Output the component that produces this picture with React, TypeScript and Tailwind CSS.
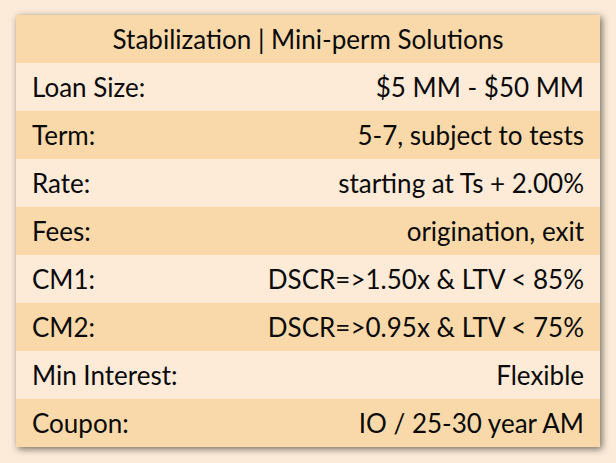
import React from "react";

const rows: [string, string][] = [
  ["Loan Size:", "$5 MM - $50 MM"],
  ["Term:", "5-7, subject to tests"],
  ["Rate:", "starting at Ts + 2.00%"],
  ["Fees:", "origination, exit"],
  ["CM1:", "DSCR=>1.50x & LTV < 85%"],
  ["CM2:", "DSCR=>0.95x & LTV < 75%"],
  ["Min Interest:", "Flexible"],
  ["Coupon:", "IO / 25-30 year AM"],
];

export default function App() {
  return (
    <div
      className="w-[616px] h-[463px] bg-[#fcebd8] pt-[15px] pl-[16px]"
      style={{ fontFamily: "Lato, 'Liberation Sans', sans-serif" }}
    >
      <div className="w-[584px] flex flex-col shadow-[2px_2px_7px_rgba(0,0,0,0.55)] text-[#0a0a0a] text-[26px]">
        <div className="h-[48px] bg-[#f9d9a9] flex items-center justify-center">
          Stabilization | Mini-perm Solutions
        </div>
        {rows.map(([k, v], i) => (
          <div
            key={k}
            className={
              "h-[48px] flex items-center justify-between px-4 " +
              (i % 2 === 0 ? "bg-[#fdebd8]" : "bg-[#f9d9a9]")
            }
          >
            <span>{k}</span>
            <span>{v}</span>
          </div>
        ))}
      </div>
    </div>
  );
}
